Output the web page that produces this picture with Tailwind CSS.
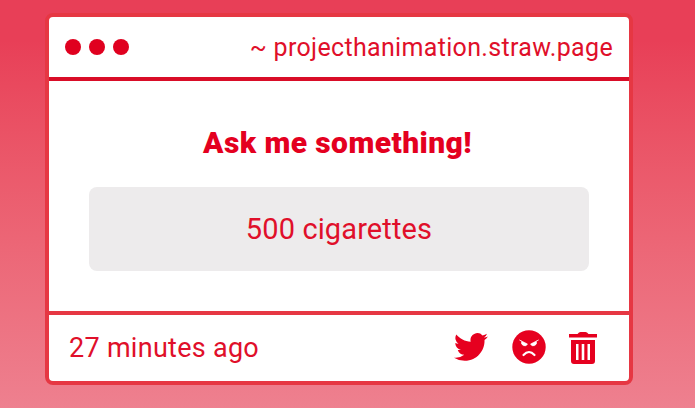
<!DOCTYPE html>
<html lang="en">
<head>
    <meta charset="UTF-8">
    <meta name="viewport" content="width=device-width, initial-scale=1.0">
    <title>Ask me something!</title>
    <script src="https://cdn.jsdelivr.net/npm/@tailwindcss/browser@4"></script>
</head>
<body class="h-screen overflow-hidden bg-linear-to-b from-[#e83f57] from-10% to-[#ee808f] pt-[13px] pl-[45px] font-['Roboto',sans-serif] text-[#e00f2a]">
    <div class="flex h-[372px] w-[588px] flex-col rounded-lg border-4 border-[#e63743] bg-white">
        <!-- Title bar -->
        <div class="flex h-16 items-center justify-between border-b-4 border-[#d90d28] px-4">
            <div class="flex gap-2">
                <span class="size-4 rounded-full bg-[#e0001f]"></span>
                <span class="size-4 rounded-full bg-[#e0001f]"></span>
                <span class="size-4 rounded-full bg-[#e0001f]"></span>
            </div>
            <span class="text-[25px] leading-none tracking-[0.33px]">~ projecthanimation.straw.page</span>
        </div>

        <!-- Question -->
        <div class="flex grow flex-col px-10 pt-11 text-center">
            <h1 class="pr-[3px] text-[30px] leading-9 font-black tracking-[0.42px] text-[#e4001f]">Ask me something!</h1>
            <div class="mt-[26px] flex h-21 items-center justify-center rounded-lg bg-[#edebec]">
                <p class="pt-px text-[29px] leading-none tracking-[0.12px]">500 cigarettes</p>
            </div>
        </div>

        <!-- Footer -->
        <div class="flex h-[70px] items-center justify-between border-t-4 border-[#e63743] pr-8 pl-5">
            <span class="text-[27px] leading-none tracking-[0.28px]">27 minutes ago</span>
            <div class="flex items-center text-[#e6001f]">
                <svg class="mb-[3px] h-[34px] w-[34px]" viewBox="0 0 24 24" fill="currentColor">
                    <path d="M23.95 4.57a10 10 0 0 1-2.82.77 4.96 4.96 0 0 0 2.16-2.72c-.95.55-2 .95-3.13 1.18a4.92 4.92 0 0 0-8.38 4.48C7.69 8.1 4.07 6.13 1.64 3.16a4.92 4.92 0 0 0 1.52 6.57 4.9 4.9 0 0 1-2.23-.61v.06c0 2.38 1.7 4.37 3.95 4.82a5 5 0 0 1-2.21.09 4.94 4.94 0 0 0 4.6 3.42A9.87 9.87 0 0 1 0 19.54a13.99 13.99 0 0 0 7.55 2.21c9.05 0 14-7.5 14-13.98 0-.21 0-.42-.02-.63a9.94 9.94 0 0 0 2.42-2.57z"/>
                </svg>
                <svg class="mb-[2px] ml-6 size-[34px]" viewBox="0 0 34 34">
                    <circle cx="17" cy="17" r="16.700" fill="currentColor"/>
                    <path d="M7.500 10l8 4a3 3 0 1 1-5.700-2.700zM26.500 10l-8 4a3 3 0 1 0 5.700-2.700z" fill="#fff" stroke="#fff" stroke-width=".6" stroke-linejoin="round"/>
                    <path d="M11.500 25q5.500-6 11 0" fill="none" stroke="#fff" stroke-width="2.200" stroke-linecap="round"/>
                </svg>
                <svg class="ml-[23px] h-8 w-7" viewBox="0 0 28 32" fill="currentColor">
                    <path d="M0 2h8.500q1.500-2 3-2h5q1.500 0 3 2H28V5.500H0z"/>
                    <path fill-rule="evenodd" d="M2 8h24v21q0 3-3 3H5q-3 0-3-3zM7 12v16h2.500V12zM12.700 12v16h2.600V12zM18.500 12v16H21V12z"/>
                </svg>
            </div>
        </div>
    </div>
</body>
</html>
